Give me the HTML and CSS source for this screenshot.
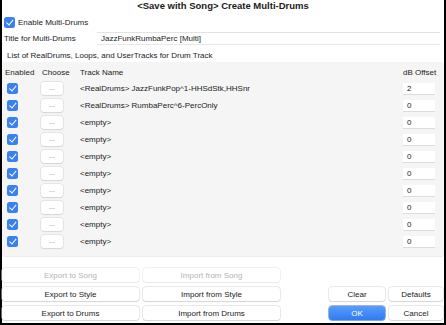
FILE: index.html
```html
<!DOCTYPE html>
<html lang="en">
<head>
    <meta charset="UTF-8">
    <title>Create Multi-Drums</title>
    <link rel="stylesheet" href="styles.css">
</head>
<body>
    <div class="window">
        <div class="heading">&lt;Save with Song&gt; Create Multi-Drums</div>

        <div class="enable-row">
            <span class="check"></span>
            <span>Enable Multi-Drums</span>
        </div>

        <div class="title-row">
            <span class="title-label">Title for Multi-Drums</span>
            <div class="text-field">JazzFunkRumbaPerc [Multi]</div>
        </div>

        <div class="list-label">List of RealDrums, Loops, and UserTracks for Drum Track</div>

        <div class="list-panel">
            <div class="list-head">
                <span>Enabled</span>
                <span class="head-choose">Choose</span>
                <span>Track Name</span>
                <span class="head-db">dB Offset</span>
            </div>
            <div class="track-row">
                <span class="check"></span>
                <span class="choose-btn">...</span>
                <span class="track-name">&lt;RealDrums&gt; JazzFunkPop^1-HHSdStk,HHSnr</span>
                <span class="db-field">2</span>
            </div>
            <div class="track-row">
                <span class="check"></span>
                <span class="choose-btn">...</span>
                <span class="track-name">&lt;RealDrums&gt; RumbaPerc^6-PercOnly</span>
                <span class="db-field">0</span>
            </div>
            <div class="track-row">
                <span class="check"></span>
                <span class="choose-btn">...</span>
                <span class="track-name">&lt;empty&gt;</span>
                <span class="db-field">0</span>
            </div>
            <div class="track-row">
                <span class="check"></span>
                <span class="choose-btn">...</span>
                <span class="track-name">&lt;empty&gt;</span>
                <span class="db-field">0</span>
            </div>
            <div class="track-row">
                <span class="check"></span>
                <span class="choose-btn">...</span>
                <span class="track-name">&lt;empty&gt;</span>
                <span class="db-field">0</span>
            </div>
            <div class="track-row">
                <span class="check"></span>
                <span class="choose-btn">...</span>
                <span class="track-name">&lt;empty&gt;</span>
                <span class="db-field">0</span>
            </div>
            <div class="track-row">
                <span class="check"></span>
                <span class="choose-btn">...</span>
                <span class="track-name">&lt;empty&gt;</span>
                <span class="db-field">0</span>
            </div>
            <div class="track-row">
                <span class="check"></span>
                <span class="choose-btn">...</span>
                <span class="track-name">&lt;empty&gt;</span>
                <span class="db-field">0</span>
            </div>
            <div class="track-row">
                <span class="check"></span>
                <span class="choose-btn">...</span>
                <span class="track-name">&lt;empty&gt;</span>
                <span class="db-field">0</span>
            </div>
            <div class="track-row">
                <span class="check"></span>
                <span class="choose-btn">...</span>
                <span class="track-name">&lt;empty&gt;</span>
                <span class="db-field">0</span>
            </div>
        </div>

        <div class="button-grid">
            <button class="btn" disabled>Export to Song</button>
            <button class="btn" disabled>Import from Song</button>
            <span></span>
            <span></span>
            <span></span>

            <button class="btn">Export to Style</button>
            <button class="btn">Import from Style</button>
            <span></span>
            <button class="btn">Clear</button>
            <button class="btn">Defaults</button>

            <button class="btn">Export to Drums</button>
            <button class="btn">Import from Drums</button>
            <span></span>
            <button class="btn btn-primary">OK</button>
            <button class="btn">Cancel</button>
        </div>
    </div>
</body>
</html>
```

FILE: styles.css
```css
body {
    margin: 0;
    padding: 0;
    background: #fff;
    font-family: 'Liberation Sans', Arial, sans-serif;
    font-size: 8px;
    color: #1b1b1b;
}
.window {
    width: 446px;
    height: 325px;
    box-sizing: border-box;
    border-left: 2px solid #000;
    border-right: 2px solid #000;
    border-bottom: 2px solid #000;
    background: #fff;
    display: flex;
    flex-direction: column;
}
.heading {
    height: 11px;
    line-height: 11px;
    text-align: center;
    font-weight: 700;
    font-size: 9.5px;
    color: #1a1a1a;
}
.check {
    width: 11px;
    height: 11px;
    border-radius: 2.5px;
    background: #3a80ee;
    flex-shrink: 0;
    position: relative;
}
.check::after {
    content: '';
    position: absolute;
    left: 3.5px;
    top: 1.3px;
    width: 2.5px;
    height: 5.5px;
    border-right: 1.8px solid #fff;
    border-bottom: 1.8px solid #fff;
    transform: rotate(40deg);
}
.enable-row {
    margin-top: 5px;
    height: 12px;
    display: flex;
    align-items: center;
    gap: 3px;
    padding-left: 2px;
}
.title-row {
    margin-top: 4px;
    height: 13px;
    display: flex;
    align-items: center;
    padding-left: 2px;
}
.title-label {
    width: 93px;
}
.text-field {
    width: 343px;
    height: 13px;
    box-sizing: border-box;
    border-top: 1px solid #e2e2e2;
    border-bottom: 1px solid #e8e8e8;
    padding-left: 4px;
    line-height: 11px;
    background: #fff;
}
.list-label {
    margin-top: 4px;
    height: 13px;
    line-height: 13px;
    padding-left: 5px;
}
.list-panel {
    height: 195px;
    box-sizing: border-box;
    background: #f5f5f5;
    border-radius: 3px;
    border-bottom: 1px solid #ececec;
    padding: 4px 9px 0 3px;
}
.list-head,
.track-row {
    display: grid;
    grid-template-columns: 36px 39px 1fr 32px;
    align-items: center;
}
.list-head {
    height: 12px;
    margin-bottom: 2px;
}
.head-choose {
    padding-left: 1px;
}
.head-db {
    text-align: right;
    white-space: nowrap;
}
.track-row {
    height: 17px;
}
.track-row .check {
    margin-left: 2px;
}
.choose-btn {
    width: 22px;
    height: 13px;
    box-sizing: border-box;
    background: #fff;
    border-radius: 3px;
    box-shadow: 0 0 0 0.5px #d6d6d6, 0 1px 1px rgba(0,0,0,0.12);
    color: #777;
    font-size: 7px;
    line-height: 11px;
    text-align: center;
}
.db-field {
    height: 12px;
    line-height: 12px;
    box-sizing: border-box;
    padding-left: 4px;
    background: #fff;
    border-bottom: 1px solid #dcdcdc;
}
.button-grid {
    margin-top: 11px;
    display: grid;
    grid-template-columns: 137px 137px 1fr 56px 54px;
    grid-auto-rows: 14px;
    column-gap: 4px;
    row-gap: 5px;
    padding-right: 1px;
}
.btn {
    font-family: inherit;
    font-size: 8px;
    color: #1b1b1b;
    background: #fff;
    border: none;
    border-radius: 3px;
    box-shadow: 0 0 0 0.5px #d4d4d4, 0 1px 1px rgba(0,0,0,0.15);
    padding: 0;
    margin: 0;
    height: 14px;
}
.btn:disabled {
    color: #b4b4b4;
    box-shadow: 0 0 0 0.5px #e4e4e4, 0 1px 1px rgba(0,0,0,0.06);
}
.btn-primary {
    color: #fff;
    background: linear-gradient(#5a9cf8, #2f7bf5);
    box-shadow: 0 0 0 0.5px #2a6fdc, 0 1px 1px rgba(0,0,0,0.15);
}
```
